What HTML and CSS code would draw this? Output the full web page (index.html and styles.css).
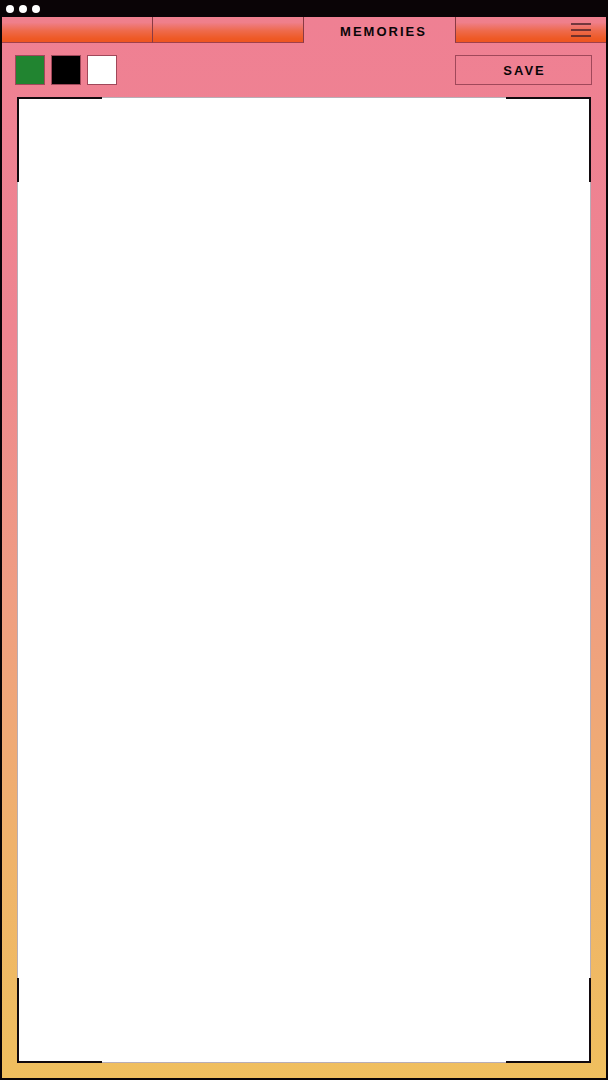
FILE: index.html
```html
<!DOCTYPE html>
<html>
<head>
<meta charset="utf-8">
<link rel="stylesheet" href="styles.css">
</head>
<body>
<div class="topbar">
  <span class="dot"></span><span class="dot"></span><span class="dot"></span>
</div>
<div class="frame">
  <div class="tabs">
    <div class="tab"></div>
    <div class="tab"></div>
    <div class="tab active">MEMORIES</div>
    <div class="tab menu-tab">
      <svg class="menu" width="20" height="14" viewBox="0 0 20 14">
        <path d="M0 1H20M0 7H20M0 13H20" stroke="#4a2228" stroke-width="1.5"/>
      </svg>
    </div>
  </div>
  <div class="toolbar">
    <div class="swatches">
      <div class="swatch green"></div>
      <div class="swatch black"></div>
      <div class="swatch white"></div>
    </div>
    <button class="save">SAVE</button>
  </div>
  <div class="canvas">
    <span class="corner tl"></span>
    <span class="corner tr"></span>
    <span class="corner bl"></span>
    <span class="corner br"></span>
  </div>
</div>
</body>
</html>
```

FILE: styles.css
```css
html, body {
  margin: 0;
  padding: 0;
  background: #0a0406;
}
body {
  width: 608px;
  height: 1080px;
  font-family: "Liberation Sans", Arial, sans-serif;
}
.topbar {
  height: 17px;
  background: #0a0406;
  display: flex;
  align-items: center;
  gap: 5px;
  padding-left: 6px;
  box-sizing: border-box;
}
.dot {
  width: 8px;
  height: 8px;
  border-radius: 50%;
  background: #ffffff;
}
.frame {
  height: 1063px;
  box-sizing: border-box;
  border: 2px solid #0a0406;
  border-top: none;
  background: linear-gradient(to bottom, #ef8093 0%, #ee8590 30%, #ef9e82 55%, #efb26c 78%, #f0bf5e 100%);
  display: flex;
  flex-direction: column;
}
.tabs {
  display: grid;
  grid-template-columns: repeat(4, minmax(0, 1fr));
  height: 26px;
}
.tab {
  box-sizing: border-box;
  background: linear-gradient(to bottom, #ef8090 0%, #ef7f8a 22%, #ee6a4c 55%, #ee5a26 85%, #ee5520 100%);
  border-bottom: 1px solid #a0404a;
  border-right: 1px solid #8a3a44;
}
.tab.active {
  background: transparent;
  border-bottom: none;
  border-right: none;
  display: flex;
  align-items: center;
  justify-content: center;
  font-weight: bold;
  font-size: 13px;
  letter-spacing: 2px;
  color: #0a0608;
  padding: 3px 0 0 8px;
}
.tab.menu-tab {
  border-right: none;
  border-left: 1px solid #8a3a44;
  display: flex;
  align-items: center;
  justify-content: flex-end;
  padding-right: 15px;
}
.toolbar {
  display: flex;
  justify-content: space-between;
  align-items: center;
  padding: 12px 14px 0 13px;
  height: 30px;
}
.swatches {
  display: flex;
  gap: 6px;
}
.swatch {
  width: 30px;
  height: 30px;
  box-sizing: border-box;
  border: 1px solid #a0485a;
}
.swatch.green { background: #218430; }
.swatch.black { background: #000000; }
.swatch.white { background: #ffffff; }
.save {
  width: 137px;
  height: 30px;
  box-sizing: border-box;
  background: transparent;
  border: 1px solid #a0485a;
  font-family: "Liberation Sans", Arial, sans-serif;
  font-weight: bold;
  font-size: 13px;
  letter-spacing: 2px;
  color: #0a0608;
  padding: 0 0 0 2px;
}
.canvas {
  position: relative;
  margin: 12px 15px 15px 15px;
  flex: 1;
  background: #ffffff;
  border: 1px solid #b8aeb6;
}
.corner {
  position: absolute;
  width: 85px;
  height: 85px;
  box-sizing: border-box;
  border: 0 solid #120a0e;
}
.corner.tl { left: -1px; top: -1px; border-left-width: 2px; border-top-width: 2px; }
.corner.tr { right: -1px; top: -1px; border-right-width: 2px; border-top-width: 2px; }
.corner.bl { left: -1px; bottom: -1px; border-left-width: 2px; border-bottom-width: 2px; }
.corner.br { right: -1px; bottom: -1px; border-right-width: 2px; border-bottom-width: 2px; }
```
